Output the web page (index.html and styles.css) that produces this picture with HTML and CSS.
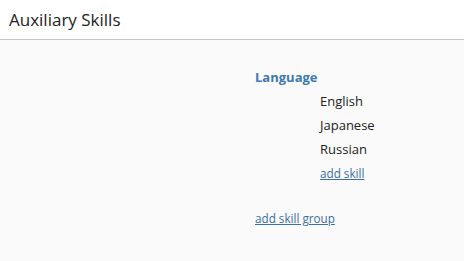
FILE: index.html
```html
<!DOCTYPE html>
<html>
<head>
	<meta charset="utf-8">
	<title>Auxiliary Skills</title>
	<link rel="stylesheet" href="styles.css">
</head>
<body>
<div class="header">
	Auxiliary Skills
</div>
<div class="content">
	<div class="group">
		<div class="group-name">Language</div>
		<ul class="skills">
			<li>English</li>
			<li>Japanese</li>
			<li>Russian</li>
			<li><a href="#" class="add">add skill</a></li>
		</ul>
	</div>
	<a href="#" class="add add-group">add skill group</a>
</div>
</body>
</html>
```

FILE: styles.css
```css
body{
	margin: 0;
	font-family: "Open Sans", sans-serif;
	background: #fafafa;
	color: #222;
}
.header{
	height: 39px;
	line-height: 39px;
	padding-left: 9px;
	background: #fff;
	border-bottom: 1px solid #c4c4c4;
	font-size: 17px;
	color: #222;
}
.content{
	padding: 28px 0 0 255px;
}
.group-name{
	font-size: 13px;
	font-weight: bold;
	color: #4178b0;
	line-height: 18px;
}
.skills{
	list-style: none;
	margin: 3px 0 0 65px;
	padding: 0;
}
.skills li{
	font-size: 13px;
	line-height: 24px;
}
.add{
	font-size: 11.7px;
	color: #3b6ea3;
}
.add-group{
	display: inline-block;
	margin-top: 25px;
}
```
